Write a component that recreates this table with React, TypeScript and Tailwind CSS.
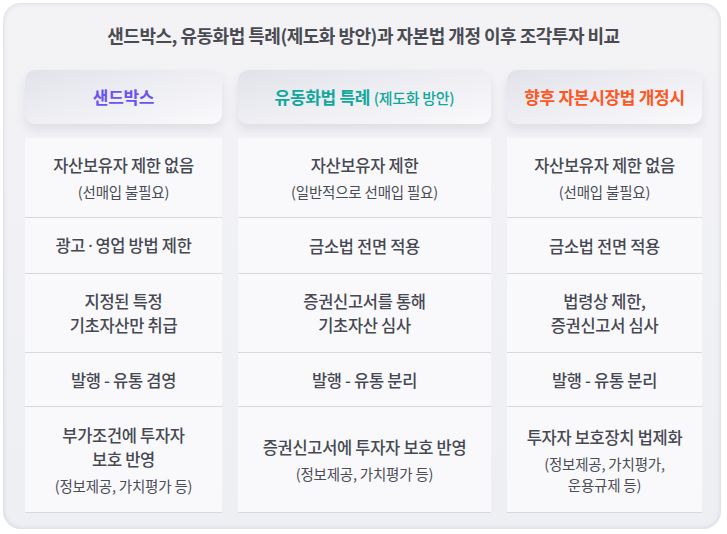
const font = { fontFamily: '"Noto Sans CJK KR", "Noto Sans", sans-serif' }

type Cell = { main: string[]; sub?: string[] }

const columns: Cell[][] = [
  [
    { main: ["자산보유자 제한 없음"], sub: ["(선매입 불필요)"] },
    { main: ["광고·영업 방법 제한"] },
    { main: ["지정된 특정", "기초자산만 취급"] },
    { main: ["발행 - 유통 겸영"] },
    { main: ["부가조건에 투자자", "보호 반영"], sub: ["(정보제공, 가치평가 등)"] },
  ],
  [
    { main: ["자산보유자 제한"], sub: ["(일반적으로 선매입 필요)"] },
    { main: ["금소법 전면 적용"] },
    { main: ["증권신고서를 통해", "기초자산 심사"] },
    { main: ["발행 - 유통 분리"] },
    { main: ["증권신고서에 투자자 보호 반영"], sub: ["(정보제공, 가치평가 등)"] },
  ],
  [
    { main: ["자산보유자 제한 없음"], sub: ["(선매입 불필요)"] },
    { main: ["금소법 전면 적용"] },
    { main: ["법령상 제한,", "증권신고서 심사"] },
    { main: ["발행 - 유통 분리"] },
    { main: ["투자자 보호장치 법제화"], sub: ["(정보제공, 가치평가,", "운용규제 등)"] },
  ],
]

const rowHeights = ["h-[80px]", "h-[56px]", "h-[79px]", "h-[54px]", "h-[106px]"]

// the CJK font draws "·" full width; the reference has a narrow one
function Line({ text }: { text: string }) {
  if (!text.includes("·")) return <>{text}</>
  const [a, b] = text.split("·")
  return (
    <>
      {a}
      <span className="mx-[3px]" style={{ fontFamily: '"Noto Sans", sans-serif' }}>·</span>
      {b}
    </>
  )
}

function Header({ children }: { children: React.ReactNode }) {
  return (
    <div className="h-[54px] rounded-[10px] bg-gradient-to-br from-[#e2e3ea] to-[#fafafc] shadow-[0_6px_10px_rgba(60,60,90,0.10)] flex items-center justify-center">
      {children}
    </div>
  )
}

function CellBox({ cell, h }: { cell: Cell; h: string }) {
  return (
    <div className={`${h} bg-[#f9f9fb] border-b border-[#d7d9e1] flex flex-col items-center justify-center text-center`}>
      {cell.main.map((line) => (
        <div key={line} className="text-[16.5px] leading-[24px] font-medium tracking-[-0.3px] text-[#464852]">
          <Line text={line} />
        </div>
      ))}
      {cell.sub && (
        <div className="mt-[4px]">
          {cell.sub.map((line) => (
            <div key={line} className="text-[14.5px] leading-[21px] tracking-[-0.2px] text-[#4a4c56]">
              {line}
            </div>
          ))}
        </div>
      )}
    </div>
  )
}

export default function App() {
  return (
    <div className="w-[727px] h-[534px] bg-white pt-[3px] pl-[3px]" style={font}>
      <div className="w-[718px] h-[526px] rounded-[18px] bg-gradient-to-b from-[#f3f3f6] to-[#eeeff3] shadow-[inset_0_0_5px_rgba(80,80,110,0.18)] pt-[17px] pl-[22px]">
        <h1 className="h-[30px] leading-[30px] w-[677px] text-center text-[18px] font-bold tracking-[-0.5px] text-[#4a4b52]">
          샌드박스, 유동화법 특례(제도화 방안)과 자본법 개정 이후 조각투자 비교
        </h1>

        <div className="mt-[20px] grid grid-cols-[197px_253px_195px] gap-x-[16px]">
          <Header>
            <span className="text-[17px] font-bold tracking-[-0.3px] text-[#6b52f6]">샌드박스</span>
          </Header>
          <Header>
            <span className="text-[17px] font-bold tracking-[-0.3px] text-[#12a79c]">
              유동화법 특례 <span className="text-[15px] font-medium">(제도화 방안)</span>
            </span>
          </Header>
          <Header>
            <span className="text-[17px] font-bold tracking-[-0.3px] text-[#ff561e]">향후 자본시장법 개정시</span>
          </Header>
        </div>

        <div className="mt-[14px] grid grid-cols-[197px_253px_195px] gap-x-[16px]">
          {columns.map((col, ci) => (
            <div key={ci} className="flex flex-col">
              {col.map((cell, ri) => (
                <CellBox key={ri} cell={cell} h={rowHeights[ri]} />
              ))}
            </div>
          ))}
        </div>
      </div>
    </div>
  )
}
